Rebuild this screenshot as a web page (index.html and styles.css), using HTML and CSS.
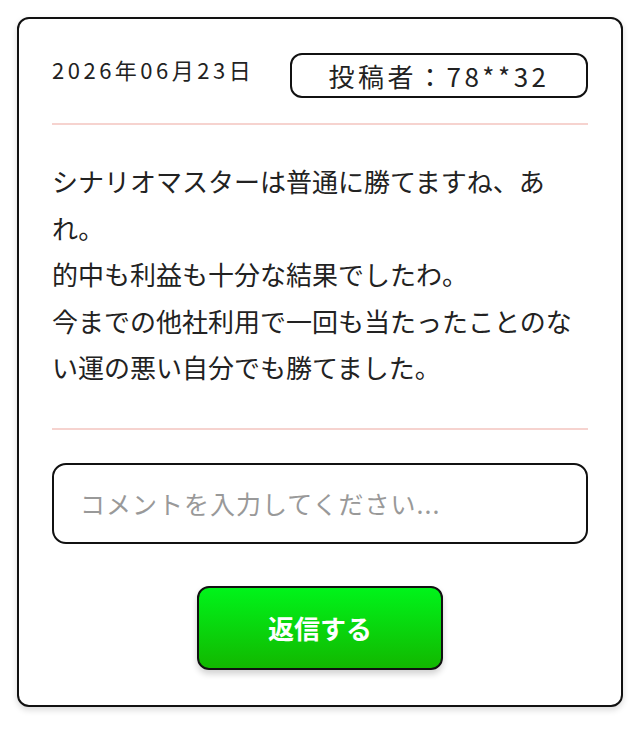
FILE: index.html
```html
<!DOCTYPE html>
<html lang="ja">
<head>
    <meta charset="UTF-8">
    <meta name="viewport" content="width=device-width, initial-scale=1.0">
    <title>口コミ</title>
    <link rel="stylesheet" href="styles.css">
</head>
<body>
    <div class="page">
        <div class="card">
            <!-- 投稿情報 -->
            <div class="meta">
                <span class="date">2026年06月23日</span>
                <span class="author">投稿者：78**32</span>
            </div>

            <hr class="line">

            <!-- 本文 -->
            <div class="review">
                <p>シナリオマスターは普通に勝てますね、あれ。</p>
                <p>的中も利益も十分な結果でしたわ。</p>
                <p>今までの他社利用で一回も当たったことのない運の悪い自分でも勝てました。</p>
            </div>

            <hr class="line">

            <!-- 返信フォーム -->
            <div class="reply">
                <input type="text" class="comment" placeholder="コメントを入力してください...">
                <button class="send">返信する</button>
            </div>
        </div>
    </div>
</body>
</html>
```

FILE: styles.css
```css
* {
    box-sizing: border-box;
}

body {
    margin: 0;
    background-color: #fff;
    color: #222;
    font-family: "Noto Sans CJK JP", "Noto Sans", sans-serif;
}

.page {
    padding: 17px;
}

.card {
    border: 2px solid #111;
    border-radius: 12px;
    background-color: #fff;
    box-shadow: 0 3px 6px rgba(0, 0, 0, 0.15);
    padding: 34px 33px 35px;
}

.meta {
    display: flex;
    justify-content: space-between;
    align-items: flex-start;
}

.date {
    font-size: 22px;
    line-height: 30px;
    margin-top: 1px;
    letter-spacing: 3.5px;
}

.author {
    width: 298px;
    height: 45px;
    border: 2px solid #111;
    border-radius: 12px;
    display: flex;
    justify-content: center;
    align-items: center;
    font-size: 26px;
    letter-spacing: 3.5px;
}

.line {
    border: none;
    border-top: 2px solid #f6d3cf;
    margin: 25px 0 0;
}

.review {
    padding: 33px 0 12px;
}

.review p {
    margin: 0;
    font-size: 26px;
    line-height: 46.5px;
}

.reply {
    padding-top: 33px;
    display: flex;
    flex-direction: column;
    align-items: center;
}

.comment {
    width: 100%;
    height: 81px;
    border: 2px solid #111;
    border-radius: 14px;
    padding: 0 26px;
    font-family: inherit;
    font-size: 25px;
    letter-spacing: 1px;
    color: #222;
    outline: none;
}

.comment::placeholder {
    color: #999;
}

.send {
    margin-top: 42px;
    width: 246px;
    height: 84px;
    border: 2px solid #111;
    border-radius: 12px;
    background: linear-gradient(#00f41a, #12b800);
    box-shadow: 0 4px 6px rgba(0, 0, 0, 0.18);
    color: #fff;
    font-family: inherit;
    font-size: 26px;
    font-weight: bold;
    cursor: pointer;
}
```
